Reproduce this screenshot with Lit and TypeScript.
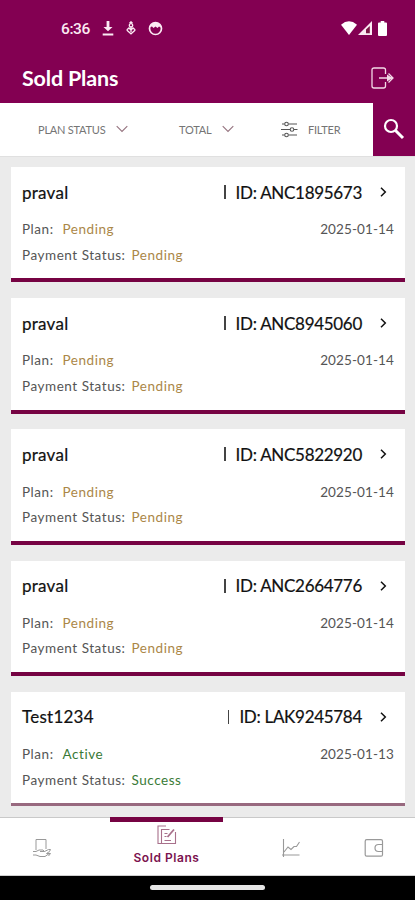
import { LitElement, html, css, svg } from "lit";
import { customElement, property } from "lit/decorators.js";
import { classMap } from "lit/directives/class-map.js";

interface Plan {
  name: string;
  id: string;
  date: string;
  plan: string;
  payment: string;
  ok: boolean;
}

const pending = (id: string): Plan => ({
  name: "praval", id, date: "2025-01-14", plan: "Pending", payment: "Pending", ok: false,
});

const PLANS: Plan[] = [
  pending("ANC1895673"),
  pending("ANC8945060"),
  pending("ANC5822920"),
  pending("ANC2664776"),
  { name: "Test1234", id: "LAK9245784", date: "2025-01-13", plan: "Active", payment: "Success", ok: true },
];

const chevronDown = html`<svg class="chev" width="12" height="8" viewBox="0 0 12 8" fill="none" stroke="#95737f" stroke-width="1.1">
  <path d="M.7 1.2 6 6.5 11.3 1.2" /></svg>`;

@customElement("status-bar")
export class StatusBar extends LitElement {
  static styles = css`
    :host { display: flex; height: 56px; align-items: center; padding: 0 28px 0 61px; box-sizing: border-box; color: #fbeaf3; }
    .time { font: 500 15.5px/20px Roboto, sans-serif; letter-spacing: -0.4px; width: 41px; padding-top: 1px; }
    .left, .right { display: flex; align-items: center; }
    .left { flex: 1; }
    svg { display: block; }
    .dl { margin-right: 12px; }
    .usb { margin-right: 12px; }
    .wifi { margin-right: 1px; }
    .cell { margin-right: 6px; }
  `;
  render() {
    return html`
      <div class="left">
        <span class="time">6:36</span>
        <svg class="dl" width="12" height="15" viewBox="0 0 12 15" fill="currentColor"><path d="M4.600 0h2.800v6H10.500L6 10.300 1.500 6H4.600zM.700 12.500h10.600v2H.700z" /></svg>
        <svg class="usb" width="10" height="14" viewBox="0 0 10 14" fill="none" stroke="currentColor" stroke-width="1.300">
          <path d="M5 .5v2M3.500 2.200 5 .800l1.500 1.400" /><circle cx="5" cy="4.300" r="1.700" /><path d="M5 6v5M1.200 8.500 3 7l2 2 2-2 1.800 1.500v1L5 12.800 1.200 9.500z" />
        </svg>
        <svg width="15" height="15" viewBox="0 0 15 15" fill="none" stroke="currentColor">
          <circle cx="7.500" cy="7.500" r="6" stroke-width="1.700" /><path d="M2 6V4Q7.500 -1 13 4v2.500L11 5.500 9.500 7 7.500 5.500 5.500 7 4 5.500z" fill="currentColor" stroke="none" />
        </svg>
      </div>
      <div class="right">
        <svg class="wifi" width="16" height="14" viewBox="0 0 16 14" fill="#fff"><path d="M0 3.700Q8-3 16 3.700L8 14z" /></svg>
        <svg class="cell" width="14" height="14" viewBox="0 0 14 14"><path d="M14 0v14H0z" fill="#fbeaf3" /><path d="M11.800 5v7.300H8V8.600z" fill="#7b1646" /></svg>
        <svg width="9" height="15" viewBox="0 0 9 15" fill="#fff"><path d="M2.700 0h3.600v1.500H8q1 0 1 1V14q0 1-1 1H1q-1 0-1-1V2.500q0-1 1-1h1.700z" /></svg>
      </div>`;
  }
}

@customElement("plan-card")
export class PlanCard extends LitElement {
  @property({ attribute: false }) plan!: Plan;
  static styles = css`
    :host { display: block; height: 115.400px; box-sizing: border-box; background: #fff; border-bottom: 4px solid #760343;
      padding: 12px 11px 0; font-family: Lato, "Liberation Sans", sans-serif; color: #555; }
    :host([last]) { height: 114px; border-bottom: 3px solid #98697f; }
    .row { display: flex; align-items: center; height: 25.500px; font-size: 13.500px; letter-spacing: 0.540px; white-space: pre; }
    .head { height: 26px; margin-bottom: 11.500px; font-size: 17px; color: #111; }
    .name, .label { flex: 1; }
    .name { letter-spacing: 0.250px; -webkit-text-stroke: 0.200px #111; }
    .bar { width: 1.500px; height: 14px; background: #444; margin-right: 10px; }
    .id { letter-spacing: -0.300px; -webkit-text-stroke: 0.200px #111; }
    .date { letter-spacing: 0.120px; }
    .value { color: #ab8747; margin-left: 1px; }
    .payment .value { margin-left: 2px; }
    .value.ok { color: #397a36; }
    .go { margin: 0 7px 0 18px; }
  `;
  render() {
    const p = this.plan;
    const tone = classMap({ value: true, ok: p.ok });
    return html`
      <div class="row head">
        <span class="name">${p.name}</span><span class="bar"></span><span class="id">ID: ${p.id}</span>
        <svg class="go" width="7" height="10" viewBox="0 0 7 10" fill="none" stroke="#111" stroke-width="1.500"><path d="m1 .8 4.300 4.200L1 9.200" /></svg>
      </div>
      <div class="row"><span class="label">Plan:  <span class=${tone}>${p.plan}</span></span><span class="date">${p.date}</span></div>
      <div class="row payment"><span>Payment Status: <span class=${tone}>${p.payment}</span></span></div>`;
  }
}

@customElement("bottom-nav")
export class BottomNav extends LitElement {
  static styles = css`
    :host { display: grid; grid-template-columns: 110px 113px 1fr 83px; height: 59px; box-sizing: border-box;
      background: #fff; border-top: 1.500px solid #c9c9c9; border-bottom: 1px solid #cfcfcf; }
    .tab { display: flex; justify-content: center; padding-top: 20px; color: #999; }
    .book { padding-right: 26px; }
    .chart { padding-left: 27px; }
    .active { flex-direction: column; align-items: center; justify-content: flex-start; border-top: 5px solid #760343; margin-top: -1px; padding-top: 3px; color: #a8708b; }
    .name { font: 600 12px/14px Inter, "Liberation Sans", sans-serif; color: #7b124f; letter-spacing: 0.550px; margin-top: 6px; }
    svg { display: block; fill: none; stroke: currentColor; flex: none; }
  `;
  render() {
    return html`
      <div class="tab book"><svg width="20" height="20" viewBox="0 0 20 20" stroke-width="1">
        <path d="M4 12V1.500h10V11M1 13.500h3l3-1.500h4l1.500 1.500H8M1 17h3l4 1.500h5l5-3.500M12.500 13.500l4-2h2l-1 2-3 2h4l-2 2.500" /></svg></div>
      <div class="tab active"><svg width="20" height="20" viewBox="0 0 20 20" stroke-width="1.100">
        <path d="M9 1H1v17.500h3M8.500 4.500h-4v14h14V7M8 4.500h4.500M7.500 8.500h3M7.500 11.500h2M7.500 15.500h6.500" /><path d="m10.500 12 6.500-7.500" stroke-width="1.800" /></svg>
        <span class="name">Sold Plans</span></div>
      <div class="tab chart"><svg width="20" height="20" viewBox="0 0 20 20" stroke-width="1.100">
        <path d="M2.500 1v18M1 17h17.500M3 14 7 9l3 2.500 3-3h2.500L18.500 4" /></svg></div>
      <div class="tab"><svg width="20" height="20" viewBox="0 0 20 20" stroke-width="1.200">
        <rect x="1.200" y="1.700" width="17.300" height="16.500" rx="1.500" /><path d="M18.500 6.500h-4a3.500 3.500 0 0 0 0 7h4" /></svg></div>`;
  }
}

@customElement("app-root")
export class AppRoot extends LitElement {
  static styles = css`
    :host { display: flex; flex-direction: column; width: 415px; height: 900px; overflow: hidden; background: #ebebeb; font-family: Lato, "Liberation Sans", sans-serif; }
    .top { background: #830052; height: 102.500px; flex: none; }
    .title { display: flex; align-items: center; justify-content: space-between; height: 44px; padding: 0 21px 0 22px; }
    h1 { margin: 0; font-size: 21.500px; line-height: 26px; font-weight: 700; color: #fff; letter-spacing: -0.180px; }
    .filters { display: flex; height: 54px; flex: none; background: #fff; color: #757575; font-size: 11px; align-items: center; letter-spacing: -0.220px; border-bottom: 1px solid #e0e0e0; box-sizing: border-box; }
    .item { display: flex; align-items: center; white-space: nowrap; }
    .status { width: 141px; padding-left: 38px; }
    .total { width: 102px; }
    .chev { margin-left: 11px; }
    .sliders { margin-right: 10px; }
    .search { margin-left: auto; width: 42px; height: 54px; background: #830052; display: grid; place-items: center; }
    .list { flex: 1; min-height: 0; display: flex; flex-direction: column; gap: 15.800px; padding: 10.500px 10px 0 11px; overflow: hidden; }
    plan-card, bottom-nav { flex: none; }
    .home { height: 24.500px; background: #000; display: flex; justify-content: center; flex: none; }
    .pill { width: 115px; height: 4.500px; border-radius: 3px; background: #e6e6e6; margin-top: 9.500px; }
    svg { display: block; }
  `;
  render() {
    return html`
      <header class="top">
        <status-bar></status-bar>
        <div class="title">
          <h1>Sold Plans</h1>
          <svg width="23" height="22" viewBox="0 0 23 22" fill="none" stroke="#f3d9e7" stroke-width="1.300">
            <path d="M14.500 7V3q0-2-2-2H3Q1 1 1 3v16q0 2 2 2h9.500q2 0 2-2v-4M8 11h14M17.500 6.500 22 11l-4.500 4.500" /><path d="M16 7.500 21.500 11 16 14.500z" fill="#f3d9e7" stroke="none" />
          </svg>
        </div>
      </header>
      <div class="filters">
        <div class="item status">PLAN STATUS ${chevronDown}</div>
        <div class="item total">TOTAL ${chevronDown}</div>
        <div class="item">
          <svg class="sliders" width="17" height="17" viewBox="0 0 17 17" fill="none" stroke="#555" stroke-width="1.100">
            ${svg`<path d="M1 3h2.500M7.500 3H16M0 8.500h9M13 8.500h3.500M1 14h2.500M7.500 14H16" /><circle cx="5.500" cy="3" r="1.800" /><circle cx="11" cy="8.500" r="1.800" /><circle cx="5.500" cy="14" r="1.800" />`}
          </svg>FILTER
        </div>
        <div class="search">
          <svg width="22" height="22" viewBox="0 0 22 22" fill="none" stroke="#fff"><circle cx="8" cy="8" r="6" stroke-width="2.200" /><path d="m12.500 12.500 7.500 7.500" stroke-width="3" /></svg>
        </div>
      </div>
      <main class="list">
        ${PLANS.map((p, i) => html`<plan-card .plan=${p} ?last=${i === PLANS.length - 1}></plan-card>`)}
      </main>
      <bottom-nav></bottom-nav>
      <footer class="home"><div class="pill"></div></footer>`;
  }
}
